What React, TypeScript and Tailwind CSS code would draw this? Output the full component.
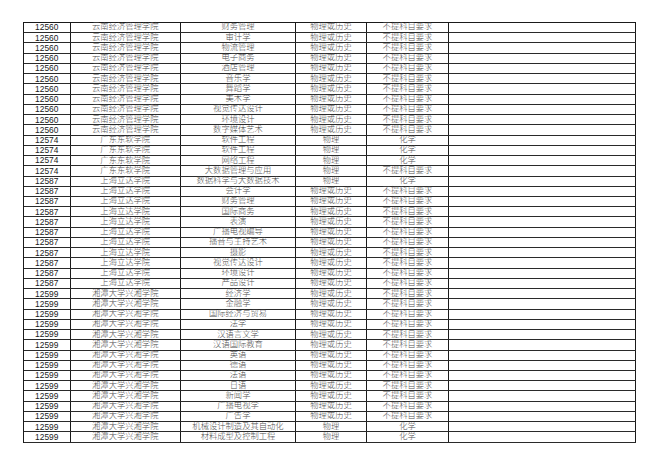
type Row = [string, string, string, string, string];

const yn = '云南经济管理学院';
const gd = '广东东软学院';
const sh = '上海立达学院';
const xt = '湘潭大学兴湘学院';
const wh = '物理或历史';
const bt = '不提科目要求';

const rows: Row[] = [
  ...['财务管理', '审计学', '物流管理', '电子商务', '酒店管理', '音乐学', '舞蹈学', '美术学', '视觉传达设计', '环境设计', '数字媒体艺术'].map(
    (m): Row => ['12560', yn, m, wh, bt],
  ),
  ['12574', gd, '软件工程', '物理', '化学'],
  ['12574', gd, '软件工程', '物理', '化学'],
  ['12574', gd, '网络工程', '物理', '化学'],
  ['12574', gd, '大数据管理与应用', '物理', bt],
  ['12587', sh, '数据科学与大数据技术', '物理', '化学'],
  ...['会计学', '财务管理', '国际商务', '表演', '广播电视编导', '播音与主持艺术', '摄影', '视觉传达设计', '环境设计', '产品设计'].map(
    (m): Row => ['12587', sh, m, wh, bt],
  ),
  ...['经济学', '金融学', '国际经济与贸易', '法学', '汉语言文学', '汉语国际教育', '英语', '德语', '法语', '日语', '新闻学', '广播电视学', '广告学'].map(
    (m): Row => ['12599', xt, m, wh, bt],
  ),
  ['12599', xt, '机械设计制造及其自动化', '物理', '化学'],
  ['12599', xt, '材料成型及控制工程', '物理', '化学'],
];

const cjk = "font-['Liberation_Serif','Noto_Sans_CJK_SC',serif] font-light text-[8.3px] text-[#505050]";

export default function App() {
  return (
    <div className="h-[466px] w-[660px] bg-white pl-[23px] pt-[22px]">
      <div className="w-[613px] border-l border-t border-[#1a1a1a]">
        {rows.map((r, i) => (
          <div
            key={i}
            className="grid h-[10.24px] grid-cols-[46.5px_110.5px_115px_71px_82px_1fr] border-b border-[#2a2a2a] leading-none"
          >
            <div className="flex items-center justify-center border-r border-[#1a1a1a] font-['Liberation_Sans',Arial,sans-serif] text-[8.4px] text-[#1a1a1a]">
              {r[0]}
            </div>
            <div className={`flex items-center justify-center border-r border-[#1a1a1a] ${cjk}`}>{r[1]}</div>
            <div className={`flex items-center justify-center border-r border-[#1a1a1a] ${cjk}`}>{r[2]}</div>
            <div className={`flex items-center justify-center border-r border-[#1a1a1a] ${cjk}`}>{r[3]}</div>
            <div className={`flex items-center justify-center border-r border-[#1a1a1a] ${cjk}`}>{r[4]}</div>
            <div className="border-r border-[#1a1a1a]" />
          </div>
        ))}
      </div>
    </div>
  );
}
